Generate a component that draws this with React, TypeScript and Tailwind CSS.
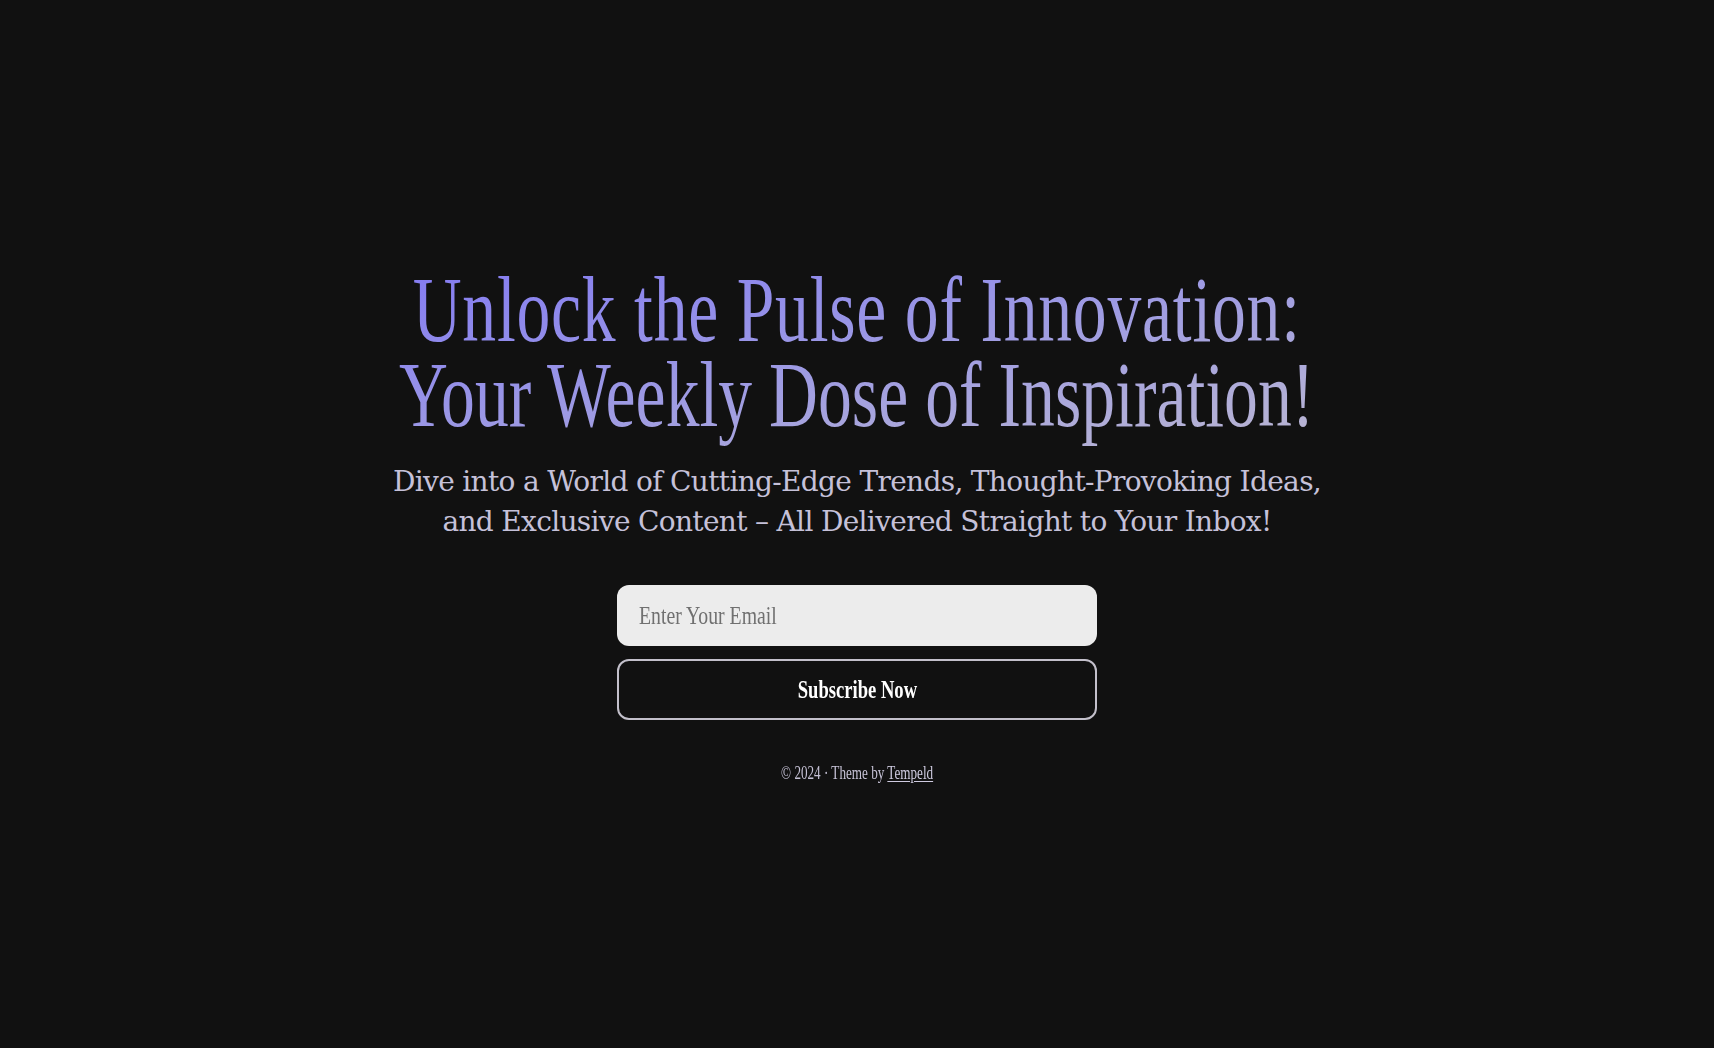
import { useState } from "react";

export default function App() {
  const [email, setEmail] = useState("");

  return (
    <main className="min-h-screen w-full bg-[#111111] flex flex-col items-center justify-center overflow-hidden pt-[2px]">
      <h1 className="w-max pt-[2px] pb-[24px] -mb-[24px] text-center font-['Liberation_Serif',serif] font-normal text-[93px] leading-[85px] scale-x-[0.728] bg-linear-to-br from-[#847af2] to-[#bdb9d0] bg-clip-text text-transparent">
        <span className="tracking-[0.011em]">Unlock the Pulse of Innovation:</span>
        <br />
        <span>Your Weekly Dose of Inspiration!</span>
      </h1>

      <p className="mt-[25px] w-max text-center font-['DejaVu_Serif',serif] text-[28px] leading-[40px] tracking-[-0.024em] text-[#c5c1d9]">
        Dive into a World of Cutting-Edge Trends, Thought-Provoking Ideas,
        <br />
        and Exclusive Content – All Delivered Straight to Your Inbox!
      </p>

      <form className="mt-[43px] flex flex-col gap-[13px] w-[480px]" onSubmit={(e) => e.preventDefault()}>
        <div className="relative h-[61px]">
          <input
            type="email"
            aria-label="Enter Your Email"
            value={email}
            onChange={(e) => setEmail(e.target.value)}
            className="w-full h-full rounded-[12px] bg-[#ececec] px-[22px] outline-none font-['Liberation_Serif',serif] text-[26px] text-[#222]"
          />
          {email === "" && (
            <span className="pointer-events-none absolute left-[22px] top-0 h-full flex items-center origin-left scale-x-[0.76] font-['Liberation_Serif',serif] text-[26px] text-[#707070] whitespace-nowrap">
              Enter Your Email
            </span>
          )}
        </div>
        <button
          type="submit"
          className="h-[61px] rounded-[12px] border-2 border-[#c3c0cb] bg-transparent flex items-center justify-center"
        >
          <span className="scale-x-[0.715] font-['Liberation_Serif',serif] font-bold text-[26px] text-white whitespace-nowrap">
            Subscribe Now
          </span>
        </button>
      </form>

      <footer className="mt-[41px] w-max scale-x-[0.73] font-['Liberation_Serif',serif] text-[18px] leading-[24px] text-[#c6c2d6] whitespace-nowrap">
        © 2024 · Theme by{" "}
        <a href="#" className="underline underline-offset-2 text-[#cfcbe0]">
          Tempeld
        </a>
      </footer>
    </main>
  );
}
